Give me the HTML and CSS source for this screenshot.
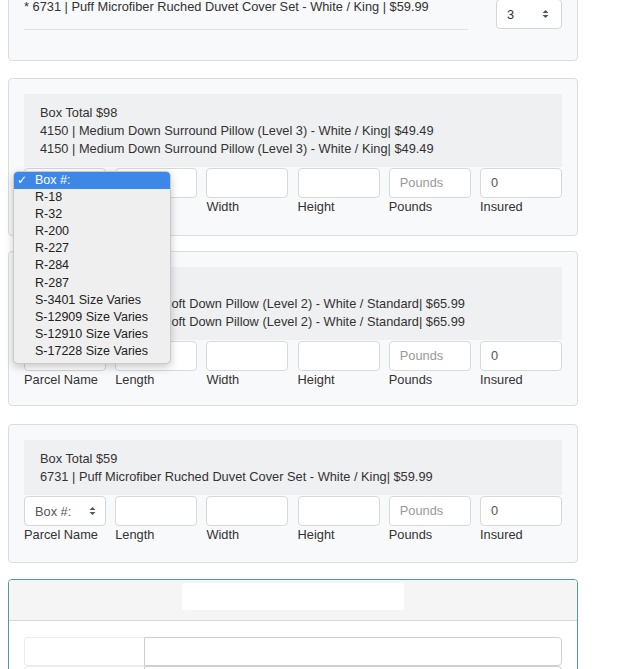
FILE: index.html
```html
<!DOCTYPE html>
<html>
<head>
<meta charset="utf-8">
<link rel="stylesheet" href="styles.css">
</head>
<body>
<div class="page">
  <div class="card card-first">
    <div class="item-row">
      <div class="item-col">
        <div class="item-text">* 6731 | Puff Microfiber Ruched Duvet Cover Set - White / King | $59.99</div>
        <div class="item-rule"></div>
      </div>
      <div class="select qty"><span>3</span><svg class="arrows" width="7" height="10" viewBox="0 0 7 10"><path d="M3.5 1 L6.5 4 L0.5 4 Z M3.5 9 L6.5 6 L0.5 6 Z" fill="#555"/></svg></div>
    </div>
  </div>

  <div class="card card-b">
    <div class="summary">
      <div>Box Total $98</div>
      <div>4150 | Medium Down Surround Pillow (Level 3) - White / King| $49.49</div>
      <div>4150 | Medium Down Surround Pillow (Level 3) - White / King| $49.49</div>
    </div>
    <div class="fields">
      <div class="field"><div class="select"><span>Box #:</span><svg class="arrows" width="7" height="10" viewBox="0 0 7 10"><path d="M3.5 1 L6.5 4 L0.5 4 Z M3.5 9 L6.5 6 L0.5 6 Z" fill="#555"/></svg></div><div class="label">Parcel Name</div></div>
      <div class="field"><div class="input"></div><div class="label">Length</div></div>
      <div class="field"><div class="input"></div><div class="label">Width</div></div>
      <div class="field"><div class="input"></div><div class="label">Height</div></div>
      <div class="field"><div class="input placeholder">Pounds</div><div class="label">Pounds</div></div>
      <div class="field"><div class="input">0</div><div class="label">Insured</div></div>
    </div>
  </div>

  <div class="card card-c">
    <div class="summary">
      <div>Box Total $131</div>
      <div>4120 | Standard Size Soft Down Pillow (Level 2) - White / Standard| $65.99</div>
      <div>4120 | Standard Size Soft Down Pillow (Level 2) - White / Standard| $65.99</div>
    </div>
    <div class="fields">
      <div class="field"><div class="select"><span>Box #:</span><svg class="arrows" width="7" height="10" viewBox="0 0 7 10"><path d="M3.5 1 L6.5 4 L0.5 4 Z M3.5 9 L6.5 6 L0.5 6 Z" fill="#555"/></svg></div><div class="label">Parcel Name</div></div>
      <div class="field"><div class="input"></div><div class="label">Length</div></div>
      <div class="field"><div class="input"></div><div class="label">Width</div></div>
      <div class="field"><div class="input"></div><div class="label">Height</div></div>
      <div class="field"><div class="input placeholder">Pounds</div><div class="label">Pounds</div></div>
      <div class="field"><div class="input">0</div><div class="label">Insured</div></div>
    </div>
  </div>

  <div class="card card-d">
    <div class="summary">
      <div>Box Total $59</div>
      <div>6731 | Puff Microfiber Ruched Duvet Cover Set - White / King| $59.99</div>
    </div>
    <div class="fields">
      <div class="field"><div class="select"><span>Box #:</span><svg class="arrows" width="7" height="10" viewBox="0 0 7 10"><path d="M3.5 1 L6.5 4 L0.5 4 Z M3.5 9 L6.5 6 L0.5 6 Z" fill="#555"/></svg></div><div class="label">Parcel Name</div></div>
      <div class="field"><div class="input"></div><div class="label">Length</div></div>
      <div class="field"><div class="input"></div><div class="label">Width</div></div>
      <div class="field"><div class="input"></div><div class="label">Height</div></div>
      <div class="field"><div class="input placeholder">Pounds</div><div class="label">Pounds</div></div>
      <div class="field"><div class="input">0</div><div class="label">Insured</div></div>
    </div>
  </div>

  <div class="card card-teal">
    <div class="teal-head"><div class="head-box"></div></div>
    <div class="teal-body">
      <div class="group"><div class="addon"></div><div class="grow"></div></div>
      <div class="group"><div class="addon"></div><div class="grow"></div></div>
    </div>
  </div>

  <div class="menu">
    <div class="menu-item selected"><span class="check">✓</span>Box #:</div>
    <div class="menu-item">R-18</div>
    <div class="menu-item">R-32</div>
    <div class="menu-item">R-200</div>
    <div class="menu-item">R-227</div>
    <div class="menu-item">R-284</div>
    <div class="menu-item">R-287</div>
    <div class="menu-item">S-3401 Size Varies</div>
    <div class="menu-item">S-12909 Size Varies</div>
    <div class="menu-item">S-12910 Size Varies</div>
    <div class="menu-item">S-17228 Size Varies</div>
  </div>
</div>
</body>
</html>
```

FILE: styles.css
```css
html, body {
  margin: 0;
  padding: 0;
  background: #fff;
  overflow: hidden;
}
body {
  font-family: "Liberation Sans", Arial, sans-serif;
  font-size: 12.8px;
  color: #333;
}
.page {
  position: relative;
  display: flow-root;
  width: 570px;
  margin-left: 8px;
  height: 669px;
}
.card {
  background: #f8f9fa;
  border: 1px solid #dcdcdc;
  border-radius: 4px;
  padding: 15px;
  margin-bottom: 17px;
}
.card-first {
  margin-top: -20px;
}
.card-b {
  margin-bottom: 15px;
}
.card-c {
  padding-bottom: 12px;
  margin-bottom: 18px;
}
.card-d {
  padding-bottom: 14px;
  margin-bottom: 16px;
}
.item-row {
  display: flex;
  align-items: flex-start;
  margin-bottom: 15px;
}
.item-col {
  width: 444px;
}
.item-text {
  padding-top: 2px;
  line-height: 18px;
  white-space: nowrap;
}
.item-rule {
  margin-top: 13px;
  border-top: 1px solid #e2e2e2;
}
.select {
  box-sizing: border-box;
  height: 30px;
  background: #fff;
  border: 1px solid #d6d6d6;
  border-radius: 4px;
  display: flex;
  align-items: center;
  justify-content: space-between;
  padding: 0 9px 0 10px;
  color: #555;
}
.qty {
  width: 66px;
  margin-left: auto;
  margin-top: 3px;
  padding-right: 12px;
  color: #333;
}
.arrows {
  display: block;
}
.summary {
  background: #eff0f1;
  padding: 10px 16px 9px;
  line-height: 18px;
  white-space: nowrap;
}
.fields {
  display: grid;
  grid-template-columns: repeat(6, 1fr);
  column-gap: 9.2px;
  margin-top: 1px;
  margin-bottom: 5px;
}
.input {
  box-sizing: border-box;
  height: 30px;
  background: #fff;
  border: 1px solid #d9d9d9;
  border-radius: 4px;
  padding: 0 10px;
  line-height: 28px;
  color: #555;
}
.placeholder {
  color: #999;
}
.label {
  line-height: 17px;
  color: #333;
  white-space: nowrap;
}
.card-teal {
  border-color: #4f9c96;
  padding: 0;
  overflow: hidden;
  background: #fff;
}
.teal-head {
  box-sizing: border-box;
  height: 41px;
  background: #f5f5f5;
  border-bottom: 1px solid #d8d8d8;
  display: flex;
  justify-content: center;
  padding-top: 3px;
}
.head-box {
  width: 222px;
  height: 27px;
  background: #fff;
  border-radius: 3px;
}
.teal-body {
  padding: 16px 15px;
}
.group {
  display: flex;
  height: 29px;
}
.addon {
  width: 119px;
  border: 1px solid #ececec;
  border-right: none;
  border-radius: 4px 0 0 4px;
  background: #fff;
}
.grow {
  flex: 1;
  border: 1px solid #cfcfcf;
  border-radius: 0 4px 4px 0;
  background: #fff;
}
.menu {
  position: absolute;
  left: 5px;
  top: 171px;
  width: 158px;
  box-sizing: border-box;
  background: #efefef;
  border: 1px solid #c9c9c9;
  border-radius: 5px;
  box-shadow: 0 3px 9px rgba(0, 0, 0, 0.22);
  padding: 0 0 3px;
  font-size: 12.5px;
  color: #222;
}
.menu-item {
  position: relative;
  height: 17.1px;
  line-height: 17.1px;
  padding-left: 21px;
  white-space: nowrap;
}
.menu-item.selected {
  background: #3d87e6;
  color: #fff;
  border-radius: 4px 4px 0 0;
}
.check {
  position: absolute;
  left: 3px;
  top: 0;
  font-family: "DejaVu Sans", sans-serif;
  font-size: 12px;
  font-weight: bold;
}
```
